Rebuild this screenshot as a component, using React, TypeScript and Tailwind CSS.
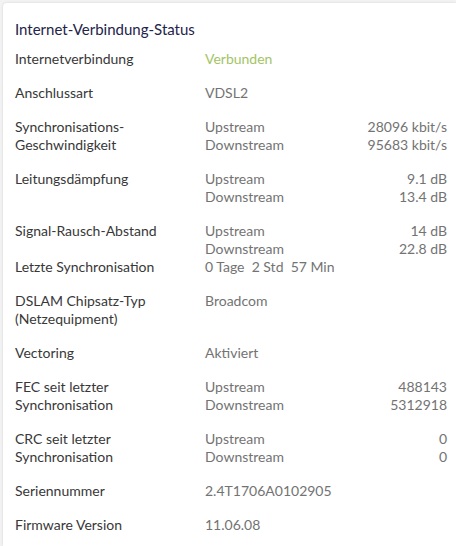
type Row = {
  label: string[];
  value?: string;
  green?: boolean;
  pairs?: [string, string][];
  tight?: boolean;
};

const rows: Row[] = [
  { label: ["Internetverbindung"], value: "Verbunden", green: true },
  { label: ["Anschlussart"], value: "VDSL2" },
  {
    label: ["Synchronisations-", "Geschwindigkeit"],
    pairs: [
      ["Upstream", "28096 kbit/s"],
      ["Downstream", "95683 kbit/s"],
    ],
  },
  {
    label: ["Leitungsdämpfung"],
    pairs: [
      ["Upstream", "9.1 dB"],
      ["Downstream", "13.4 dB"],
    ],
  },
  {
    label: ["Signal-Rausch-Abstand"],
    pairs: [
      ["Upstream", "14 dB"],
      ["Downstream", "22.8 dB"],
    ],
    tight: true,
  },
  { label: ["Letzte Synchronisation"], value: "0 Tage  2 Std  57 Min" },
  { label: ["DSLAM Chipsatz-Typ", "(Netzequipment)"], value: "Broadcom" },
  { label: ["Vectoring"], value: "Aktiviert" },
  {
    label: ["FEC seit letzter", "Synchronisation"],
    pairs: [
      ["Upstream", "488143"],
      ["Downstream", "5312918"],
    ],
  },
  {
    label: ["CRC seit letzter", "Synchronisation"],
    pairs: [
      ["Upstream", "0"],
      ["Downstream", "0"],
    ],
  },
  { label: ["Seriennummer"], value: "2.4T1706A0102905" },
  { label: ["Firmware Version"], value: "11.06.08" },
];

export default function App() {
  return (
    <div className="w-[456px] h-[546px] overflow-hidden bg-[#f3f3f3] pt-[3px] pl-[3px] font-['Lato',sans-serif]">
      <div className="h-full bg-white rounded-tl-[4px] shadow-[0_0_3px_rgba(0,0,0,0.12)] pl-[12px] pr-[9px] pt-[17px]">
        <h2 className="text-[15px] leading-[18px] text-[#23234a] mb-[12px]">
          Internet-Verbindung-Status
        </h2>
        {rows.map((r) => (
          <div
            key={r.label.join(" ")}
            className={`flex text-[14px] leading-[18px] ${r.tight ? "" : "mb-[16px]"}`}
          >
            <div className="w-[190px] shrink-0 text-[#383838]">
              {r.label.map((l) => (
                <div key={l}>{l}</div>
              ))}
            </div>
            <div className="flex-1 text-[#737373]">
              {r.value && (
                <div className={r.green ? "text-[#a3c466]" : ""}>
                  <span className="whitespace-pre">{r.value}</span>
                </div>
              )}
              {r.pairs?.map(([k, v]) => (
                <div key={k} className="flex justify-between">
                  <span>{k}</span>
                  <span>{v}</span>
                </div>
              ))}
            </div>
          </div>
        ))}
      </div>
    </div>
  );
}
